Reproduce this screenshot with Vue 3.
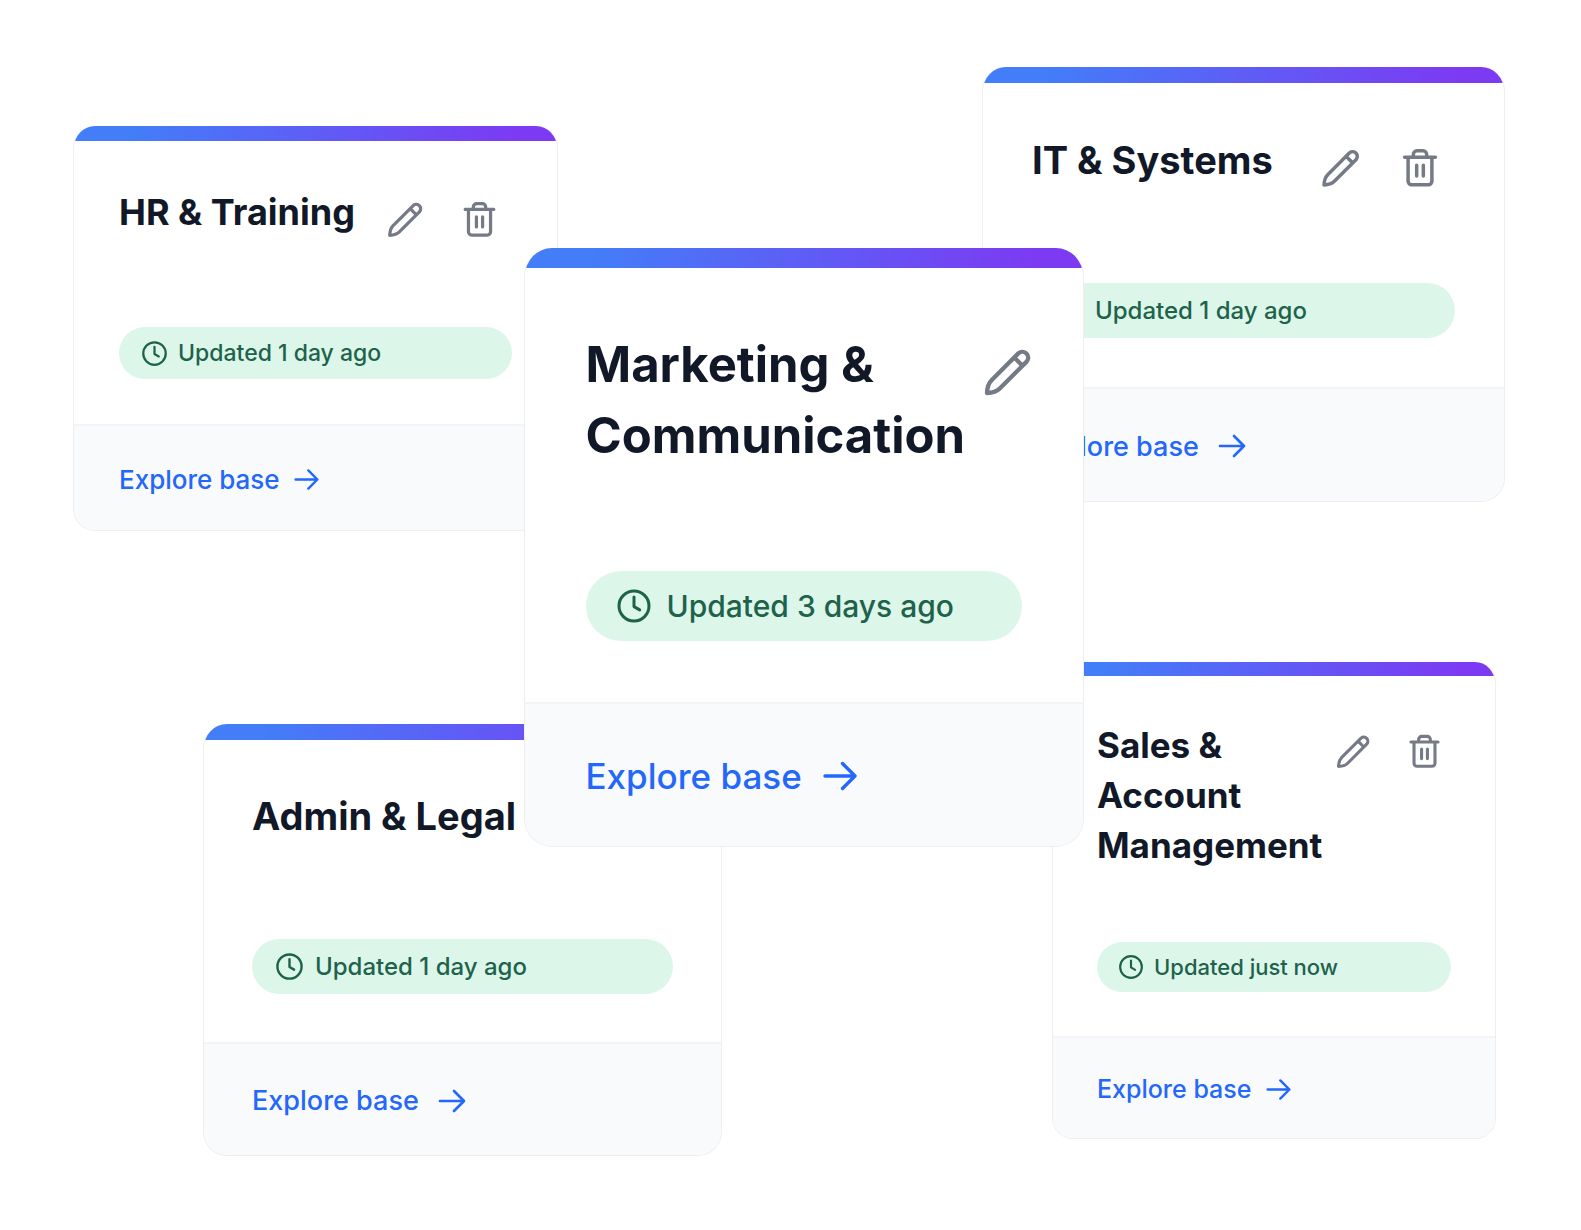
<template>
  <main class="board">
    <article
      v-for="base in bases"
      :key="base.id"
      class="card"
      :class="[base.size, base.id]"
    >
      <div class="card-strip"></div>

      <div class="card-body">
        <header class="card-header">
          <h2>{{ base.title }}</h2>
          <div class="card-actions">
            <button type="button" class="icon-btn" aria-label="Edit">
              <svg viewBox="0 0 24 24" class="icon">
                <path d="M2.3 21.7c.1-2.4.5-4.3 2.1-5.9L16.9 3.3a2.7 2.7 0 0 1 3.8 3.8L8.2 19.6c-1.6 1.6-3.5 2-5.9 2.1zM14.9 5.3l3.8 3.8" />
              </svg>
            </button>
            <button v-if="base.removable" type="button" class="icon-btn" aria-label="Delete">
              <svg viewBox="0 0 24 24" class="icon">
                <path d="M3.2 5.8h17.6M8.2 5.8V4.2a2 2 0 0 1 2-2h3.6a2 2 0 0 1 2 2v1.6M5.2 5.8v13.8a2 2 0 0 0 2 2h9.6a2 2 0 0 0 2-2V5.8M10.1 10.4v6.2M13.9 10.4v6.2" />
              </svg>
            </button>
          </div>
        </header>

        <p class="badge">
          <svg viewBox="0 0 24 24" class="badge-icon">
            <circle cx="12" cy="12" r="10" />
            <path d="M12 6v6.4l3.8 2.2" />
          </svg>
          <span>{{ base.updated }}</span>
        </p>
      </div>

      <footer class="card-footer">
        <a href="#" class="explore">
          <span>Explore base</span>
          <svg viewBox="0 0 24 24" class="arrow">
            <path d="M3 12h18M13.5 4.5L21 12l-7.5 7.5" />
          </svg>
        </a>
      </footer>
    </article>
  </main>
</template>

<script setup>
import { ref } from 'vue'

// Knowledge bases, the last one lies on top
const bases = ref([
  { id: 'hr', size: 'md', title: 'HR & Training', updated: 'Updated 1 day ago', removable: true },
  { id: 'it', size: 'lg', title: 'IT & Systems', updated: 'Updated 1 day ago', removable: true },
  { id: 'admin', size: 'lg', title: 'Admin & Legal', updated: 'Updated 1 day ago', removable: true },
  { id: 'sales', size: 'sm', title: 'Sales &\nAccount\nManagement', updated: 'Updated just now', removable: true },
  { id: 'marketing', size: 'xl', title: 'Marketing &\nCommunication', updated: 'Updated 3 days ago', removable: false }
])
</script>

<style>
body {
  margin: 0;
  background: #fff;
}
</style>

<style scoped>
.board {
  position: relative;
  min-height: 100vh;
  overflow: hidden;
  font-family: Inter, "Liberation Sans", sans-serif;
}

.card {
  position: absolute;
  box-sizing: border-box;
  border: 1px solid #eceef1;
  border-top: none;
  border-radius: var(--radius);
  background: #fff;
  overflow: hidden;
}

/* Card sizes */
.sm {
  --radius: 21px;
  --strip: 14px;
  --pad: 44px;
  --title: 35px;
  --title-line: 50px;
  --button: 63px;
  --icon: 37px;
  --header-gap: 72px;
  --badge-height: 50px;
  --badge-text: 22px;
  --badge-icon: 26px;
  --badge-pad: 21px;
  --badge-gap: 10px;
  --footer: 102px;
  --link: 25px;
  --link-gap: 13px;
  --arrow: 29px;
}

.md {
  --radius: 22px;
  --strip: 15px;
  --pad: 45px;
  --title: 36px;
  --title-line: 52px;
  --button: 66px;
  --icon: 39px;
  --header-gap: 75px;
  --badge-height: 52px;
  --badge-text: 23px;
  --badge-icon: 27px;
  --badge-pad: 22px;
  --badge-gap: 10px;
  --footer: 106px;
  --link: 26px;
  --link-gap: 12px;
  --arrow: 29px;
}

.lg {
  --radius: 24px;
  --strip: 16px;
  --pad: 49px;
  --title: 38px;
  --title-line: 56px;
  --button: 71px;
  --icon: 42px;
  --header-gap: 80px;
  --badge-height: 55px;
  --badge-text: 24px;
  --badge-icon: 29px;
  --badge-pad: 23px;
  --badge-gap: 11px;
  --footer: 114px;
  --link: 27px;
  --link-gap: 17px;
  --arrow: 32px;
}

.xl {
  --radius: 28px;
  --strip: 20px;
  --pad: 61px;
  --title: 49px;
  --title-line: 71px;
  --button: 86px;
  --icon: 52px;
  --header-gap: 100px;
  --badge-height: 70px;
  --badge-text: 30px;
  --badge-icon: 36px;
  --badge-pad: 30px;
  --badge-gap: 15px;
  --footer: 144px;
  --link: 35px;
  --link-gap: 18px;
  --arrow: 40px;
}

/* Places on the board */
.hr {
  top: 126px;
  left: 73px;
  width: 485px;
}

.it {
  top: 67px;
  right: 76px;
  width: 523px;
}

.admin {
  --pad: 48px;
  --footer: 113px;
  top: 724px;
  left: 203px;
  width: 519px;
}

.sales {
  top: 662px;
  right: 85px;
  width: 444px;
}

.marketing {
  top: 248px;
  left: calc(50% - 267px);
  width: 560px;
}

.card-strip {
  height: var(--strip);
  background: linear-gradient(100deg, #437df8 12%, #7c3af2 92%);
}

.card-body {
  padding: var(--pad);
}

.card-header {
  display: flex;
  justify-content: space-between;
  align-items: flex-start;
  margin-bottom: var(--header-gap);
}

.card-header h2 {
  margin: 0;
  color: #111827;
  font-size: var(--title);
  font-weight: 700;
  line-height: var(--title-line);
  white-space: pre;
}

.card-actions {
  display: flex;
  flex: none;
  gap: 8px;
}

.icon-btn {
  display: flex;
  align-items: center;
  justify-content: center;
  width: var(--button);
  height: var(--button);
  padding: 0;
  border: none;
  border-radius: 12px;
  background: transparent;
  color: #747a86;
  cursor: pointer;
}

.icon-btn:hover {
  background: #f3f4f6;
}

.icon,
.badge-icon,
.arrow {
  flex: none;
  fill: none;
  stroke: currentColor;
  stroke-width: 2;
  stroke-linecap: round;
  stroke-linejoin: round;
}

.icon {
  width: var(--icon);
  height: var(--icon);
}

.badge {
  display: flex;
  align-items: center;
  gap: var(--badge-gap);
  height: var(--badge-height);
  margin: 0;
  padding: 0 var(--badge-pad);
  border-radius: 36px;
  background: #ddf6ea;
  color: #1d634b;
  font-size: var(--badge-text);
  font-weight: 500;
  white-space: nowrap;
}

.badge-icon {
  width: var(--badge-icon);
  height: var(--badge-icon);
}

.card-footer {
  display: flex;
  align-items: center;
  box-sizing: border-box;
  height: var(--footer);
  padding: 2px var(--pad) 0;
  border-top: 2px solid #f2f4f7;
  background: #f9fafc;
}

.explore {
  display: flex;
  align-items: center;
  gap: var(--link-gap);
  color: #2367fb;
  font-size: var(--link);
  font-weight: 500;
  text-decoration: none;
}

.explore:hover {
  text-decoration: underline;
}

.arrow {
  width: var(--arrow);
  height: var(--arrow);
}
</style>
